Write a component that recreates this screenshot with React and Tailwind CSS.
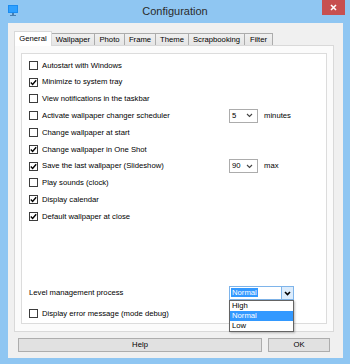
import React from 'react';

const font = { fontFamily: '"Liberation Sans", Arial, sans-serif' };

const tabs = [
  { name: 'Wallpaper', w: 'w-[43px]' },
  { name: 'Photo', w: 'w-[30px]' },
  { name: 'Frame', w: 'w-[31px]' },
  { name: 'Theme', w: 'w-[33px]' },
  { name: 'Scrapbooking', w: 'w-[56px]' },
  { name: 'Filter', w: 'w-[28px]' },
];

function Box({ checked }) {
  return (
    <div className="w-[9px] h-[9px] border border-[#3c3c3c] bg-white flex items-center justify-center shrink-0">
      {checked && (
        <svg width="7" height="7" viewBox="0 0 7 7">
          <path d="M0.8 3.6 L2.6 5.4 L6.2 1.2" fill="none" stroke="#000" strokeWidth="1.4" />
        </svg>
      )}
    </div>
  );
}

function Check({ checked, label }) {
  return (
    <div className="flex items-center">
      <Box checked={checked} />
      <span className="ml-[4px] whitespace-nowrap">{label}</span>
    </div>
  );
}

function Chevron({ bold }) {
  return (
    <svg width="7" height="5" viewBox="0 0 7 5">
      <path d="M1 1 L3.5 3.5 L6 1" fill="none" stroke={bold ? '#000' : '#444'} strokeWidth={bold ? 1.6 : 1.1} />
    </svg>
  );
}

function Select({ value }) {
  return (
    <div className="w-[29px] h-[14px] border border-[#acacac] bg-white flex items-center">
      <span className="flex-1 pl-[2px]">{value}</span>
      <span className="mr-[4px] flex items-center"><Chevron /></span>
    </div>
  );
}

function Row({ children }) {
  return <div className="h-[16.8px] flex items-center">{children}</div>;
}

export default function App() {
  return (
    <div className="w-[350px] h-[364px] bg-[#8fc6f2] flex flex-col text-[7.7px] text-black" style={font}>
      {/* title bar */}
      <div className="h-[23px] grid grid-cols-[1fr_auto_1fr] items-start">
        <div className="pl-[8px] pt-[5px]">
          <svg width="10" height="11" viewBox="0 0 10 11">
            <rect x="0" y="0" width="10" height="8" fill="#1a8cf0" />
            <rect x="1" y="1" width="8" height="6" fill="#2ea0ff" />
            <rect x="4" y="8" width="2" height="2" fill="#4a7fb0" />
            <rect x="2" y="10" width="6" height="1" fill="#4a7fb0" />
          </svg>
        </div>
        <div className="h-[23px] flex items-center text-[11px] text-[#2b2b2b]">Configuration</div>
        <div className="flex justify-end pr-[5px]">
          <div className="w-[23px] h-[15px] bg-[#c75050] flex items-center justify-center">
            <svg width="7" height="7" viewBox="0 0 7 7">
              <path d="M1 1 L6 6 M6 1 L1 6" stroke="#fff" strokeWidth="1.6" />
            </svg>
          </div>
        </div>
      </div>

      {/* body */}
      <div className="flex-1 pl-[8px] pr-[7px] pb-[6px]">
        <div className="h-full bg-[#f0f0f0] pt-[8px] flex flex-col">
          {/* tabs */}
          <div className="ml-[6px] h-[14px] flex items-end">
            <div className="relative z-10 w-[38px] h-[15px] -mb-px bg-white border border-b-0 border-[#d9d9d9] flex items-center justify-center">
              General
            </div>
            {tabs.map((t) => (
              <div
                key={t.name}
                className={`${t.w} h-[12px] border border-l-0 border-b-0 border-[#acacac] bg-gradient-to-b from-[#f0f0f0] to-[#e5e5e5] flex items-center justify-center whitespace-nowrap`}
              >
                {t.name}
              </div>
            ))}
          </div>

          {/* panel */}
          <div className="ml-[6px] w-[320px] h-[287px] border border-[#d9d9d9] bg-[#fbfbfb] px-[6px] pt-[7px] pb-[7px] flex flex-col">
            <div className="flex-1 border border-[#dcdcdc] bg-white pl-[7px] pt-[3px] pb-[1px] flex flex-col">
              <Row><Check label="Autostart with Windows" /></Row>
              <Row><Check checked label="Minimize to system tray" /></Row>
              <Row><Check label="View notifications in the taskbar" /></Row>
              <Row>
                <div className="w-[200px]"><Check label="Activate wallpaper changer scheduler" /></div>
                <Select value="5" />
                <span className="ml-[6px]">minutes</span>
              </Row>
              <Row><Check label="Change wallpaper at start" /></Row>
              <Row><Check checked label="Change wallpaper in One Shot" /></Row>
              <Row>
                <div className="w-[200px]"><Check checked label="Save the last wallpaper (Slideshow)" /></div>
                <Select value="90" />
                <span className="ml-[6px]">max</span>
              </Row>
              <Row><Check label="Play sounds (clock)" /></Row>
              <Row><Check checked label="Display calendar" /></Row>
              <Row><Check checked label="Default wallpaper at close" /></Row>

              <div className="flex-1" />

              <div className="h-[16px] flex items-center">
                <span className="w-[200px]">Level management process</span>
                <div className="relative z-20">
                  <div className="w-[65px] h-[14px] border border-[#7eb4ea] bg-white flex items-center">
                    <div className="flex-1 pl-[1px]">
                      <span className="bg-[#3399ff] text-white px-[1px]">Normal</span>
                    </div>
                    <div className="w-[12px] h-full bg-[#dcecfc] border-l border-[#7eb4ea] flex items-center justify-center">
                      <Chevron bold />
                    </div>
                  </div>
                  <div className="absolute left-0 top-full w-[65px] border border-[#646464] bg-white shadow-[1px_1px_2px_rgba(0,0,0,0.25)]">
                    <div className="h-[10px] leading-[10px] pl-[2px]">High</div>
                    <div className="h-[10px] leading-[10px] pl-[2px] bg-[#3399ff] text-white">Normal</div>
                    <div className="h-[10px] leading-[10px] pl-[2px]">Low</div>
                  </div>
                </div>
              </div>
              <div className="h-[16px] mt-[5px] flex items-center">
                <Check label="Display error message (mode debug)" />
              </div>
            </div>
          </div>

          {/* buttons */}
          <div className="mt-[6px] pl-[10px] flex gap-[6px]">
            <div className="w-[244px] h-[14px] border border-[#adadad] bg-[#e1e1e1] flex items-center justify-center">Help</div>
            <div className="w-[62px] h-[14px] border border-[#adadad] bg-[#e1e1e1] flex items-center justify-center">OK</div>
          </div>
        </div>
      </div>
    </div>
  );
}
